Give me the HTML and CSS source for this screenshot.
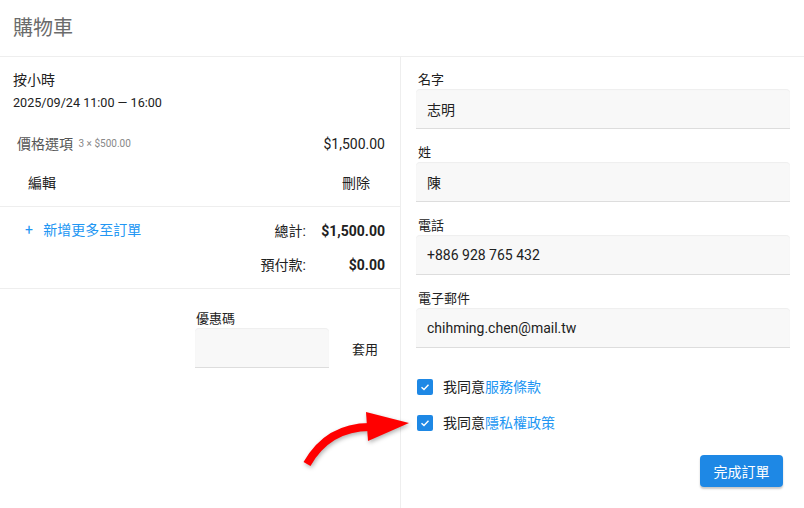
FILE: index.html
```html
<!DOCTYPE html>
<html lang="zh-Hant">
<head>
    <meta charset="UTF-8">
    <meta name="viewport" content="width=device-width, initial-scale=1.0">
    <title>購物車</title>
    <link rel="stylesheet" href="styles.css">
</head>
<body>

<div class="cart-header">購物車</div>

<div class="cart-main">
    <div class="cart-summary">
        <div class="booking">
            <div class="booking-type">按小時</div>
            <div class="booking-time">2025/09/24 11:00 — 16:00</div>
        </div>
        <div class="line-item">
            <div class="line-name">價格選項 <span class="line-qty">3 × $500.00</span></div>
            <div class="line-price">$1,500.00</div>
        </div>
        <div class="item-actions">
            <span>編輯</span>
            <span>刪除</span>
        </div>

        <div class="totals">
            <a class="add-more" href="#">+&nbsp;&nbsp; 新增更多至訂單</a>
            <div class="totals-table">
                <span class="t-label">總計:</span><span class="t-value">$1,500.00</span>
                <span class="t-label">預付款:</span><span class="t-value">$0.00</span>
            </div>
        </div>

        <div class="coupon">
            <div class="coupon-field">
                <label class="coupon-label">優惠碼</label>
                <input class="coupon-input" type="text">
            </div>
            <button class="coupon-btn">套用</button>
        </div>
    </div>

    <div class="cart-form">
        <label class="field-label">名字</label>
        <input class="field-input" type="text" value="志明">

        <label class="field-label">姓</label>
        <input class="field-input" type="text" value="陳">

        <label class="field-label">電話</label>
        <input class="field-input" type="text" value="+886 928 765 432">

        <label class="field-label">電子郵件</label>
        <input class="field-input" type="text" value="chihming.chen@mail.tw">

        <div class="agree first">
            <span class="check"><svg viewBox="0 0 16 16" width="16" height="16"><path d="M4.5 8.2 L7 10.5 L11.5 5.8" fill="none" stroke="#fff" stroke-width="1.4"/></svg></span>
            <span>我同意<a href="#">服務條款</a></span>
        </div>
        <div class="agree">
            <span class="check"><svg viewBox="0 0 16 16" width="16" height="16"><path d="M4.5 8.2 L7 10.5 L11.5 5.8" fill="none" stroke="#fff" stroke-width="1.4"/></svg></span>
            <span>我同意<a href="#">隱私權政策</a></span>
        </div>

        <div class="form-actions">
            <button class="submit-btn">完成訂單</button>
        </div>
    </div>
</div>

<!-- annotation arrow -->
<svg class="pointer-arrow" width="130" height="80" viewBox="0 0 130 80">
    <path d="M17 64 Q38 27 80 27" fill="none" stroke="#ff0000" stroke-width="8"/>
    <polygon points="76,12 119,23 78,41" fill="#ff0000"/>
</svg>

</body>
</html>
```

FILE: styles.css
```css
body {
    margin: 0;
    font-family: Roboto, "Noto Sans CJK TC", sans-serif;
    color: #212121;
    background: #fff;
    font-size: 14px;
}
a {
    color: #2196f3;
    text-decoration: none;
}
.cart-header {
    height: 56px;
    line-height: 56px;
    padding-left: 13px;
    font-size: 20px;
    color: #6b6b6b;
    border-bottom: 1px solid #eee;
}
.cart-main {
    display: grid;
    grid-template-columns: 401px 1fr;
    min-height: calc(100vh - 57px);
}
.cart-summary {
    border-right: 1px solid #eee;
}
.booking {
    padding: 13px 13px 0;
    font-size: 12.6px;
    line-height: 20px;
}
.booking-type {
    font-size: 14px;
}
.booking-time {
    margin-top: 3px;
}
.line-item {
    display: flex;
    justify-content: space-between;
    align-items: center;
    padding: 0 15px 0 17px;
    margin-top: 21px;
    line-height: 20px;
}
.line-name {
    font-size: 14px;
    color: #555;
}
.line-qty {
    font-size: 10px;
    color: #888;
    margin-left: 2px;
    vertical-align: 2px;
}
.line-price {
    font-size: 14px;
}
.item-actions {
    display: flex;
    justify-content: space-between;
    padding: 0 30px 13px 28px;
    margin-top: 19px;
    line-height: 20px;
    border-bottom: 1px solid #eee;
}
.totals {
    display: flex;
    justify-content: space-between;
    align-items: flex-start;
    padding: 13px 15px 13px 25px;
    border-bottom: 1px solid #eee;
    line-height: 20px;
}
.totals-table {
    display: grid;
    grid-template-columns: auto 79px;
    row-gap: 14px;
    margin-top: 1px;
}
.t-label {
    text-align: right;
}
.t-value {
    text-align: right;
    font-weight: 700;
}
.coupon {
    display: flex;
    align-items: flex-end;
    padding: 21px 0 0 195px;
}
.coupon-field {
    display: flex;
    flex-direction: column;
}
.coupon-label {
    font-size: 13px;
    line-height: 18px;
    padding-left: 1px;
}
.coupon-input {
    width: 134px;
    height: 40px;
    box-sizing: border-box;
    border: none;
    border-bottom: 1px solid #ddd;
    border-radius: 4px 4px 0 0;
    background: #f8f8f8;
    box-shadow: inset 0 1px 1px rgba(0, 0, 0, 0.04);
}
.coupon-btn {
    background: none;
    border: none;
    font-family: inherit;
    font-size: 13px;
    color: #212121;
    padding: 0 16px;
    margin-left: 7px;
    height: 40px;
}
.cart-form {
    display: flex;
    flex-direction: column;
    padding: 14px 14px 0 15px;
}
.field-label {
    font-size: 13px;
    line-height: 18px;
    padding-left: 2px;
    margin-top: 15px;
}
.field-label:first-child {
    margin-top: 0;
}
.field-input {
    height: 40px;
    box-sizing: border-box;
    border: none;
    border-bottom: 1px solid #ddd;
    border-radius: 4px 4px 0 0;
    background: #f8f8f8;
    box-shadow: inset 0 1px 1px rgba(0, 0, 0, 0.04);
    padding: 0 11px;
    font-family: inherit;
    font-size: 14px;
    color: #212121;
}
.agree {
    display: flex;
    align-items: center;
    gap: 10px;
    padding-left: 1px;
    margin-top: 16px;
    line-height: 20px;
}
.agree.first {
    margin-top: 29px;
}
.check {
    width: 16px;
    height: 16px;
    border-radius: 2px;
    background: #1e88e5;
    display: flex;
}
.form-actions {
    display: flex;
    justify-content: flex-end;
    padding-right: 7px;
    margin-top: 22px;
}
.submit-btn {
    background: #1e88e5;
    color: #fff;
    border: none;
    border-radius: 4px;
    height: 32px;
    width: 83px;
    font-family: inherit;
    font-size: 14px;
    box-shadow: 0 2px 2px rgba(0, 0, 0, 0.22);
}
.pointer-arrow {
    position: absolute;
    left: 290px;
    top: 400px;
    filter: drop-shadow(1px 2px 2px rgba(0, 0, 0, 0.3));
}
```
